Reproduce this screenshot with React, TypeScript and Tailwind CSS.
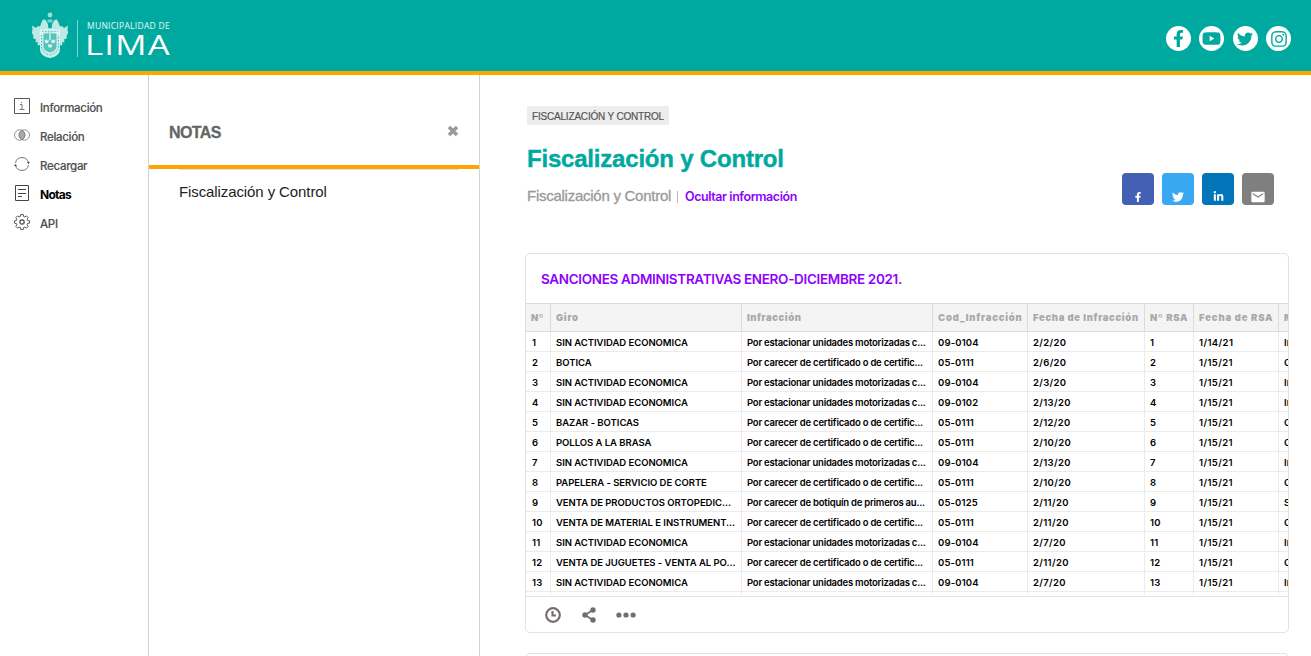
import React from "react";
import { FaFacebookF, FaTwitter, FaYoutube, FaInstagram, FaLinkedinIn } from "react-icons/fa";
import { MdEmail } from "react-icons/md";

const PARKING = "Por estacionar unidades motorizadas c...";
const CERT = "Por carecer de certificado o de certific...";
const NONE = "SIN ACTIVIDAD ECONOMICA";

const rows: string[][] = [
  ["1", NONE, PARKING, "09-0104", "2/2/20", "1", "1/14/21", "In"],
  ["2", "BOTICA", CERT, "05-0111", "2/6/20", "2", "1/15/21", "C"],
  ["3", NONE, PARKING, "09-0104", "2/3/20", "3", "1/15/21", "In"],
  ["4", NONE, PARKING, "09-0102", "2/13/20", "4", "1/15/21", "In"],
  ["5", "BAZAR - BOTICAS", CERT, "05-0111", "2/12/20", "5", "1/15/21", "C"],
  ["6", "POLLOS A LA BRASA", CERT, "05-0111", "2/10/20", "6", "1/15/21", "C"],
  ["7", NONE, PARKING, "09-0104", "2/13/20", "7", "1/15/21", "In"],
  ["8", "PAPELERA - SERVICIO DE CORTE", CERT, "05-0111", "2/10/20", "8", "1/15/21", "C"],
  ["9", "VENTA DE PRODUCTOS ORTOPEDIC...", "Por carecer de botiquín de primeros au...", "05-0125", "2/11/20", "9", "1/15/21", "S"],
  ["10", "VENTA DE MATERIAL E INSTRUMENT...", CERT, "05-0111", "2/11/20", "10", "1/15/21", "C"],
  ["11", NONE, PARKING, "09-0104", "2/7/20", "11", "1/15/21", "In"],
  ["12", "VENTA DE JUGUETES - VENTA AL PO...", CERT, "05-0111", "2/11/20", "12", "1/15/21", "C"],
  ["13", NONE, PARKING, "09-0104", "2/7/20", "13", "1/15/21", "In"],
];

const heads = ["Nº", "Giro", "Infracción", "Cod_Infracción", "Fecha de Infracción", "Nº RSA", "Fecha de RSA", "M"];
const headTracking = [
  "tracking-[0.3px]",
  "tracking-[0.7px]",
  "tracking-[0.55px]",
  "tracking-[0.8px]",
  "tracking-[0.66px]",
  "tracking-[0.7px]",
  "tracking-[0.85px]",
  "tracking-[0.4px]",
];
const cellTracking = [
  "tracking-[0.35px]",
  "tracking-[-0.04px]",
  "tracking-[-0.23px]",
  "tracking-[0.15px]",
  "tracking-[0.35px]",
  "tracking-[0.35px]",
  "tracking-[0.4px]",
  "tracking-[0px]",
];
const grid = "grid grid-cols-[25px_191px_191px_95px_117px_49px_85px_30px] w-[783px]";

function Crest() {
  return (
    <svg width="38" height="48" viewBox="0 0 38 48" fill="none" className="shrink-0">
      <g fill="#e0f5f3">
        <circle cx="19" cy="4" r="2.400" opacity=".7" />
        <path d="M16.500 8.500h5v3h-5z" opacity=".55" />
        <path d="M12 8.500c1.600-.4 3 .5 3.500 2l1.500 3 .5 5-4 3-2.500 5-.5 6-2.500 2-1.500-.5.500-3-2.500.5.500-3-3-1.500.5-2-1.500-3 .5-4.500-.5-3L5 17l2-2 2 .5 1.500-4z" opacity=".85" />
        <path d="M26 8.500c-1.600-.4-3 .5-3.500 2l-1.500 3-.5 5 4 3 2.500 5 .5 6 2.500 2 1.500-.5-.5-3 2.500.5-.5-3 3-1.500-.5-2 1.500-3-.5-4.500.5-3L33 17l-2-2-2 .5-1.500-4z" opacity=".85" />
        <path d="M9 18q5 1 10-1 5 2 10 1v20c0 5-4 8-10 9-6-1-10-4-10-9z" opacity=".9" />
      </g>
      <path d="M12.500 22.500h13v13c0 3-3 5-6.500 6-3.500-1-6.500-3-6.500-6z" fill="#53c3bc" />
      <path d="M11 20q8 1.500 16 0M10.500 24v12q1 6 8.500 8 7.500-2 8.500-8V24" stroke="#37b9b1" strokeWidth="1" strokeDasharray="1.500 1.500" />
      <g fill="#dcf4f2">
        <path d="M18.300 23h1.400v6h-1.400z" />
        <path d="M13.500 28.500l1.500 1 .8-1.500.8 1.500 1.400-1-.8 3.500h-3zM20 28.500l1.500 1 .8-1.500.8 1.500 1.400-1-.8 3.500h-3zM16.700 33l1.500 1 .8-1.500.8 1.500 1.500-1-.8 3.500h-3z" />
      </g>
    </svg>
  );
}

function Header() {
  const circle = "w-[25px] h-[25px] rounded-full bg-white text-[#00a9a0] flex items-center justify-center";
  return (
    <header className="h-[75px] shrink-0 bg-[#00a9a0] border-b-4 border-[#ffa500] flex items-start justify-between pl-[31px] pr-5">
      <div className="flex pt-[11px] text-white">
        <Crest />
        <div className="w-px h-[37px] bg-[#7fd4cf] mt-[9px] ml-2" />
        <div className="ml-[9px] pt-[10px]">
          <div className="font-['Open_Sans',sans-serif] text-[8.500px] leading-[10px] tracking-[0.28px] whitespace-nowrap text-[#e8f8f7]">
            MUNICIPALIDAD DE
          </div>
          <div className="-ml-[2px] origin-left scale-x-[1.24] font-['Open_Sans',sans-serif] text-[28px] leading-[26px] tracking-[1px] w-[72px] whitespace-nowrap">
            LIMA
          </div>
        </div>
      </div>
      <div className="flex gap-[8.300px] pt-[26px]">
        <span className={circle}><FaFacebookF size={17} /></span>
        <span className={circle}><FaYoutube size={19} /></span>
        <span className={circle}><FaTwitter size={16} /></span>
        <span className={circle}><FaInstagram size={18} /></span>
      </div>
    </header>
  );
}

const navIcons: React.ReactNode[] = [
  <svg key="i" width="16" height="16" viewBox="0 0 16 16" fill="none" stroke="#555">
    <path d="M.5.5h15v15H.5z" />
    <path d="M6 6.500h2v4.500M5.500 11.500h5M7.500 4v1" strokeWidth=".8" />
  </svg>,
  <svg key="r" width="16" height="16" viewBox="0 0 16 16" fill="none" stroke="#777" strokeWidth=".8">
    <circle cx="5.700" cy="8" r="5.200" />
    <circle cx="10.300" cy="8" r="5.200" />
    <path d="M8 3.300a5.200 5.200 0 0 1 0 9.400 5.200 5.200 0 0 1 0-9.400z" fill="#aaa" />
  </svg>,
  <svg key="c" width="16" height="16" viewBox="0 0 16 16" fill="none" stroke="#666" strokeWidth=".9">
    <path d="M1.500 7A6.600 6.600 0 0 1 14.500 7M14.500 9A6.600 6.600 0 0 1 1.500 9" />
    <path d="M13 6l1.500 2L16 6zM0 10l1.500-2L3 10z" fill="#444" stroke="none" />
  </svg>,
  <svg key="n" width="16" height="16" viewBox="0 0 16 16" fill="none" stroke="#444">
    <path d="M1.500.5h13v15h-13z" />
    <path d="M4 4.500h8M4 8.500h8M4 11.500h4" />
  </svg>,
  <svg key="a" width="16" height="16" viewBox="0 0 16 16" fill="none" stroke="#444">
    <path strokeWidth=".9" d="M6.700.6h2.600l.3 1.900 1.300.5 1.600-1.100 1.700 1.700-1.100 1.600.5 1.300 1.900.3v2.400l-1.900.3-.5 1.300 1.100 1.600-1.700 1.700-1.600-1.100-1.300.5-.3 1.900H6.700l-.3-1.900-1.300-.5-1.600 1.100-1.700-1.700 1.100-1.600-.5-1.300-1.900-.3V6.800l1.900-.3.5-1.300-1.100-1.600 1.700-1.700 1.600 1.100 1.300-.5z" />
    <circle cx="8" cy="8" r="2.200" strokeWidth="1.200" />
  </svg>,
];
const navItems = ["Información", "Relación", "Recargar", "Notas", "API"];

function Sidebar() {
  return (
    <nav className="w-[149px] shrink-0 border-r border-[#d2d2d2] pt-[18px] pl-[14px]">
      {navItems.map((label, i) => (
        <div key={label} className="h-[29px] flex items-center">
          <span className="w-[26px] pb-[3px]">{navIcons[i]}</span>
          <span
            className={
              label === "Notas"
                ? "font-['Inter',sans-serif] text-[12px] font-bold tracking-[-0.75px] text-black"
                : "pt-[2px] font-['Inter',sans-serif] text-[11.500px] font-medium tracking-[-0.3px] text-[#505050] [-webkit-text-stroke:0.15px_#505050]"
            }
          >
            {label}
          </span>
        </div>
      ))}
    </nav>
  );
}

function NotesPanel() {
  return (
    <aside className="w-[331px] shrink-0 border-r border-[#d2d2d2]">
      <div className="h-[94px] border-b-4 border-[#ffa500] flex items-center justify-between pl-5 pr-[20px] pt-[24px]">
        <h2 className="pt-[2px] font-['Liberation_Sans',sans-serif] font-bold text-[16px] leading-5 tracking-[-0.6px] text-[#666] [-webkit-text-stroke:0.3px_#666]">
          NOTAS
        </h2>
        <svg width="12" height="12" viewBox="0 0 12 12" className="mb-[2px]">
          <path d="M2 2l8 8M10 2l-8 8" stroke="#999" strokeWidth="3.500" />
        </svg>
      </div>
      <div className="ml-[30px] mr-5 border-t border-[#e2e2e2] pt-[12px] font-['Liberation_Sans',sans-serif] text-[15px] leading-5 tracking-[-0.1px] text-[#222]">
        Fiscalización y Control
      </div>
    </aside>
  );
}

function ShareButtons() {
  const box = "w-8 h-8 rounded-[4px] text-white flex justify-center items-end";
  return (
    <div className="flex gap-2">
      <span className={`${box} bg-[#4460b4] pb-[3px]`}><FaFacebookF size={10} /></span>
      <span className={`${box} bg-[#38a8f3] pb-[2px]`}><FaTwitter size={12} /></span>
      <span className={`${box} bg-[#0275b9] pb-[3px]`}><FaLinkedinIn size={11} /></span>
      <span className={`${box} bg-[#7f7f7f]`}><MdEmail size={16} /></span>
    </div>
  );
}

function DataCard() {
  return (
    <section className="w-[764px] h-[380px] border border-[#e2e2e2] rounded-[5px] overflow-hidden bg-white flex flex-col shrink-0">
      <div className="h-[49px] shrink-0 flex items-center pl-[15px] pt-[1px]">
        <h3 className="font-['Inter',sans-serif] font-semibold text-[13.500px] tracking-[-0.33px] text-[#8f00ff] whitespace-nowrap">
          SANCIONES ADMINISTRATIVAS ENERO-DICIEMBRE 2021.
        </h3>
      </div>
      <div className="h-[293px] shrink-0 overflow-hidden font-['Inter',sans-serif] text-[9.500px]">
        <div className={`${grid} h-[29px] bg-[#f4f4f4] border-y border-[#dcdcdc]`}>
          {heads.map((h, i) => (
            <div
              key={h}
              className={`border-r border-[#dcdcdc] pl-[5px] leading-[28px] h-[27px] font-black text-[#a9a9a9] whitespace-nowrap overflow-hidden ${headTracking[i]}`}
            >
              {h}
            </div>
          ))}
        </div>
        {rows.map((row) => (
          <div key={row[0]} className={`${grid} h-5 border-b border-[#ebebeb]`}>
            {row.map((cell, i) => (
              <div
                key={i}
                className={`border-r border-[#ebebeb] h-[19px] leading-[22px] font-semibold text-black whitespace-nowrap overflow-hidden ${
                  i === 0 ? "pl-[6px]" : "pl-[5px]"
                } ${cellTracking[i]}`}
              >
                {cell}
              </div>
            ))}
          </div>
        ))}
        <div className={`${grid} h-[3px]`}>
          {heads.map((h) => (
            <div key={h} className="border-r border-[#ebebeb]" />
          ))}
        </div>
      </div>
      <div className="grow border-t border-[#e2e2e2] flex items-center pl-[19px] text-[#756d6d]">
        <svg width="16" height="16" viewBox="0 0 16 16" fill="none" stroke="currentColor" strokeWidth="2.200">
          <circle cx="8" cy="8" r="6.800" />
          <path d="M7.500 4v4.500h3.500" />
        </svg>
        <svg width="14" height="16" viewBox="0 0 14 16" fill="currentColor" className="ml-[21px]">
          <circle cx="11" cy="3" r="2.700" />
          <circle cx="3" cy="8" r="2.700" />
          <circle cx="11" cy="13" r="2.700" />
          <path d="M11 3L3 8l8 5" fill="none" stroke="currentColor" strokeWidth="1.800" />
        </svg>
        <svg width="20" height="6" viewBox="0 0 20 6" fill="currentColor" className="ml-5">
          <circle cx="2.900" cy="3" r="2.600" />
          <circle cx="10" cy="3" r="2.600" />
          <circle cx="17.100" cy="3" r="2.600" />
        </svg>
      </div>
    </section>
  );
}

export default function App() {
  return (
    <div className="h-[656px] overflow-hidden bg-white flex flex-col">
      <Header />
      <div className="flex grow min-h-0">
        <Sidebar />
        <NotesPanel />
        <main className="grow min-w-0 overflow-hidden pl-[45px] pt-[31px] flex flex-col">
          <div className="pl-[2px] h-[147px] shrink-0 flex flex-col items-start">
            <span className="h-[19px] w-[142px] bg-[#ededed] pl-[5px] font-['Liberation_Sans',sans-serif] text-[10px] leading-[21px] tracking-[-0.19px] text-[#555] [-webkit-text-stroke:0.2px_#555] whitespace-nowrap">
              FISCALIZACIÓN Y CONTROL
            </span>
            <h1 className="mt-[18px] font-['Liberation_Sans',sans-serif] font-bold text-[24px] leading-[32px] tracking-[-0.2px] text-[#00a9a0] [-webkit-text-stroke:0.4px_#00a9a0] whitespace-nowrap">
              Fiscalización y Control
            </h1>
            <div className="w-full flex items-start justify-between pr-[37px]">
              <div className="flex items-baseline pt-[11px] leading-5 whitespace-nowrap">
                <span className="font-['Liberation_Sans',sans-serif] text-[15px] tracking-[-0.26px] text-[#999] [-webkit-text-stroke:0.3px_#999]">
                  Fiscalización y Control
                </span>
                <span className="w-px h-[12px] bg-[#bbb] ml-[6px] self-center" />
                <span className="font-['Inter',sans-serif] ml-[7px] text-[12.500px] font-semibold tracking-[-0.44px] text-[#8f00ff]">
                  Ocultar información
                </span>
              </div>
              <div className="-mt-[2px]">
                <ShareButtons />
              </div>
            </div>
          </div>
          <DataCard />
          <div className="mt-5 w-[764px] h-[100px] shrink-0 border border-[#e2e2e2] rounded-[5px]" />
        </main>
      </div>
    </div>
  );
}
